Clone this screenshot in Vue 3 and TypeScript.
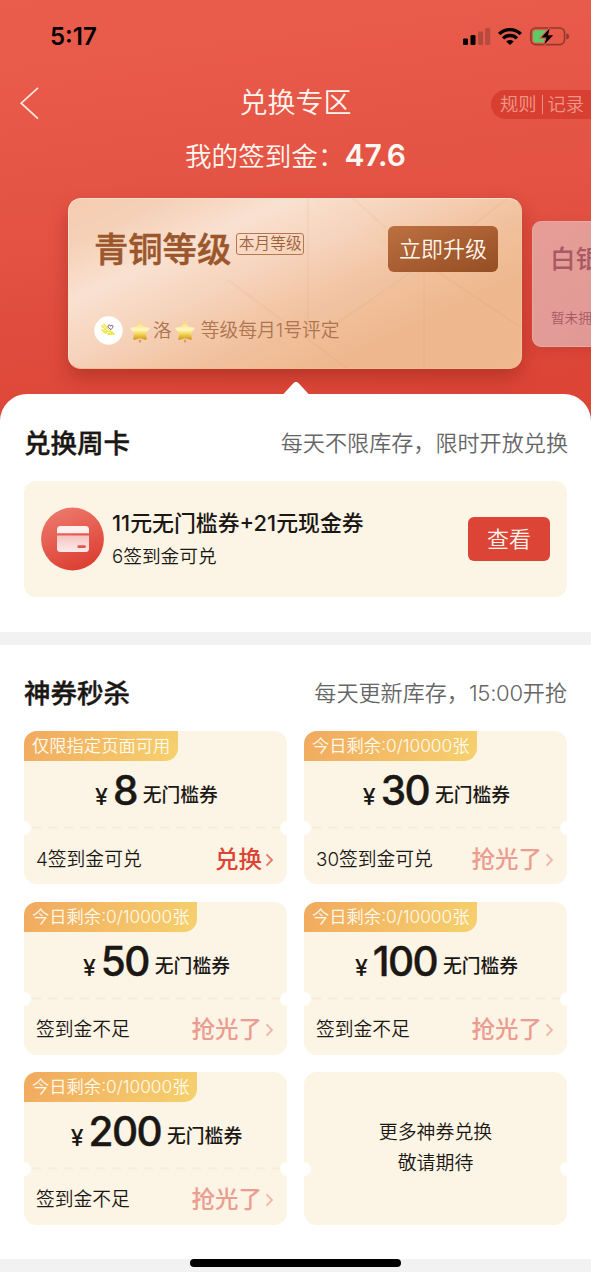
<script setup lang="ts">
interface Coupon {
  tag: string
  amount: string
  cost: string
  action: string
  available: boolean
}

const coupons: Coupon[] = [
  { tag: '仅限指定页面可用', amount: '8', cost: '4签到金可兑', action: '兑换', available: true },
  { tag: '今日剩余:0/10000张', amount: '30', cost: '30签到金可兑', action: '抢光了', available: false },
  { tag: '今日剩余:0/10000张', amount: '50', cost: '签到金不足', action: '抢光了', available: false },
  { tag: '今日剩余:0/10000张', amount: '100', cost: '签到金不足', action: '抢光了', available: false },
  { tag: '今日剩余:0/10000张', amount: '200', cost: '签到金不足', action: '抢光了', available: false },
]
</script>

<template>
  <div class="page">
    <header class="hero">
      <div class="status">
        <span class="time">5:17</span>
        <svg class="status-icons" width="108" height="22" viewBox="0 0 108 22">
          <rect x="1" y="12.5" width="5" height="6.5" rx="1.3" fill="#000" />
          <rect x="8.5" y="9" width="5" height="10" rx="1.3" fill="#000" />
          <rect x="16" y="5.5" width="5" height="13.5" rx="1.3" fill="#b14a3e" />
          <rect x="23.2" y="2" width="5" height="17" rx="1.3" fill="#b84b3f" />
          <g fill="none" stroke="#000" stroke-width="3.4">
            <path d="M37.2 8 A15.4 15.4 0 0 1 58.8 8" />
            <path d="M41.1 12.4 A9.8 9.8 0 0 1 54.9 12.4" />
          </g>
          <path d="M48 19 L44.2 15.4 Q48 12.6 51.8 15.4 Z" fill="#000" />
          <rect x="68.9" y="2" width="33.6" height="16.6" rx="4.8" fill="none" stroke="#93382e" stroke-width="1.6" />
          <path d="M104.3 7.2 Q107.2 8.2 107.2 10.4 T104.3 13.6 Z" fill="#93382e" />
          <path d="M74 4.2 H87 V16.6 H74 Q71 16.6 71 13.6 V7.2 Q71 4.2 74 4.2Z" fill="#5ccb68" />
          <path d="M87.7 2.2 L79.4 11.6 H84.5 L82.4 18.4 L91.2 9.2 H86 Z" fill="#000" stroke="#e75b4b" stroke-width="2.4" paint-order="stroke" />
        </svg>
      </div>

      <nav class="nav">
        <svg class="back" width="20" height="34" viewBox="0 0 20 34">
          <path d="M19 1.8 L2.2 17.2 L19 32.6" fill="none" stroke="#ffe9e2" stroke-width="1.7" />
        </svg>
        <h1 class="title">兑换专区</h1>
        <div class="links"><span>规则</span><i class="bar"></i><span>记录</span></div>
      </nav>

      <div class="balance"><span class="balance-label">我的签到金：</span><b class="balance-value">47.6</b></div>

      <div class="levels">
        <section class="level bronze">
          <svg class="facets" width="454" height="171" viewBox="0 0 454 171">
            <path d="M240 0 L356 70 L240 140Z" fill="#fff" opacity=".03" />
            <path d="M285 0 L356 65 L440 0 M356 65 V171 M356 65 L262 130 M356 65 L454 130 M240 0 V135 M160 82 L280 171" fill="none" stroke="#cf8c60" stroke-opacity=".08" stroke-width="2" />
          </svg>
          <div class="level-top">
            <strong class="level-name">青铜等级</strong>
            <span class="level-badge">本月等级</span>
            <button class="upgrade">立即升级</button>
          </div>
          <div class="member">
            <svg width="29" height="29" viewBox="0 0 29 29">
              <circle cx="14.5" cy="14.5" r="14.2" fill="#fff" />
              <path d="M8 10 L12 14 M10 8.5 L14 13 M8 14 L12 17 M12 15 L17 16 M14 18 L18 18 M16 15 L20 18" fill="none" stroke="#eee94b" stroke-width="1.8" stroke-linecap="round" stroke-dasharray="2 1" />
              <path d="M17 13.6 C13.7 11.9 13.3 9.8 14.8 9.1 C15.8 8.6 16.5 9.5 16.6 10.2 C17.4 9 19 9.1 19 10.4 C19 11.7 17.8 12.5 17 13.6Z" fill="#fff" stroke="#74508a" stroke-width="1" />
            </svg>
            <svg class="star star-a" width="20" height="22" viewBox="0 0 20 22">
              <defs>
                <linearGradient id="gold" x1="0" y1="0" x2="0" y2="1">
                  <stop offset="0" stop-color="#fbd978" />
                  <stop offset=".45" stop-color="#fff8c0" />
                  <stop offset=".72" stop-color="#f1d24e" />
                  <stop offset="1" stop-color="#d59c26" />
                </linearGradient>
              </defs>
              <path d="M10 19.6v1" stroke="#d9a04e" stroke-width="2.2" stroke-linecap="round" />
              <path d="M10 1.4 L12.8 6.4 L18.6 7.4 L14.8 11.9 L15.8 18 L10 16 L4.2 18 L5.2 11.9 L1.4 7.4 L7.2 6.4Z" fill="url(#gold)" stroke="url(#gold)" stroke-width="2" stroke-linejoin="round" />
            </svg>
            <span class="member-name">洛</span>
            <svg class="star star-b" width="20" height="22" viewBox="0 0 20 22">
              <path d="M10 19.6v1" stroke="#d9a04e" stroke-width="2.2" stroke-linecap="round" />
              <path d="M10 1.4 L12.8 6.4 L18.6 7.4 L14.8 11.9 L15.8 18 L10 16 L4.2 18 L5.2 11.9 L1.4 7.4 L7.2 6.4Z" fill="url(#gold)" stroke="url(#gold)" stroke-width="2" stroke-linejoin="round" />
            </svg>
            <span class="member-note">等级每月1号评定</span>
          </div>
        </section>

        <section class="level silver">
          <strong class="silver-name">白银等级</strong>
          <span class="silver-note">暂未拥有</span>
        </section>
      </div>
    </header>

    <main class="panel">
      <svg class="pointer" width="30" height="14" viewBox="0 0 30 14">
        <path d="M1.5 14 L12.1 2.5 Q15 -.8 17.9 2.5 L28.5 14Z" fill="#fff" />
      </svg>

      <section class="weekly">
        <div class="heading">
          <h2>兑换周卡</h2>
          <p>每天不限库存，限时开放兑换</p>
        </div>
        <div class="week-card">
          <svg class="week-icon" width="64" height="64" viewBox="0 0 64 64">
            <defs>
              <linearGradient id="disc" x1=".2" y1="0" x2=".6" y2="1">
                <stop offset="0" stop-color="#ee7a6e" />
                <stop offset="1" stop-color="#dc3f31" />
              </linearGradient>
              <linearGradient id="face" x1="0" y1="0" x2="0" y2="1">
                <stop offset="0" stop-color="#f6c4c1" />
                <stop offset="1" stop-color="#fcebea" />
              </linearGradient>
            </defs>
            <circle cx="31.5" cy="32" r="31.4" fill="url(#disc)" />
            <path d="M16 26.2 V22.5 Q16 19 19.5 19 H44.5 Q48 19 48 22.5 V26.2Z" fill="#fdf0ee" />
            <path d="M16 28.6 H48 V41.5 Q48 45 44.5 45 H19.5 Q16 45 16 41.5Z" fill="url(#face)" />
            <rect x="36.5" y="38.3" width="8.3" height="2.8" rx="1" fill="#e0584e" />
          </svg>
          <div class="week-text">
            <strong>11元无门槛券+21元现金券</strong>
            <span>6签到金可兑</span>
          </div>
          <button class="view">查看</button>
        </div>
      </section>

      <div class="divider"></div>

      <section class="flash">
        <div class="heading">
          <h2>神券秒杀</h2>
          <p>每天更新库存，<span class="clock">15:00</span>开抢</p>
        </div>
        <div class="grid">
          <article v-for="c in coupons" :key="c.amount" class="ticket">
            <span class="tag">{{ c.tag }}</span>
            <div class="value">
              <span class="yen">¥</span><b class="amount">{{ c.amount }}</b><span class="kind">无门槛券</span>
            </div>
            <svg class="perforation" width="263" height="3" viewBox="0 0 263 3">
              <path d="M8 1.5 H256" stroke="#f7ecda" stroke-width="2" stroke-dasharray="9 7" />
            </svg>
            <div class="ticket-foot">
              <span class="cost">{{ c.cost }}</span>
              <span class="action" :class="{ soldout: !c.available }">
                {{ c.action }}
                <svg width="10" height="16" viewBox="0 0 10 16">
                  <path d="M1.5 2.4 L7 8 L1.5 13.6" fill="none" stroke="currentColor" stroke-width="1.8" />
                </svg>
              </span>
            </div>
          </article>
          <article class="ticket more">
            <p>更多神券兑换</p>
            <p>敬请期待</p>
          </article>
        </div>
      </section>
      <footer class="bottom"><div class="home-bar"></div></footer>
    </main>
  </div>
</template>

<style>
body {
  margin: 0;
  background: #fff;
}
</style>

<style scoped>
.page {
  width: 591px;
  height: 1280px;
  overflow: hidden;
  background: #fff;
  font-family: Inter, "Noto Sans CJK SC", sans-serif;
  color: #1a1714;
}
h1, h2, p { margin: 0; }
button { border: 0; padding: 0; font-family: inherit; }
.page * { box-sizing: border-box; white-space: nowrap; }

.hero {
  height: 430px;
  overflow: hidden;
  background: linear-gradient(173deg, #ea5d4c 0%, #e45444 43%, #dc4536 90%);
}
.status {
  height: 71px;
  padding: 26px 21px 0 50px;
  display: flex;
  justify-content: space-between;
}
.time { font-size: 24px; line-height: 21px; font-weight: 600; color: #000; }
.nav {
  height: 63px;
  display: grid;
  grid-template-columns: 140px 1fr 140px;
  align-items: center;
}
.back { margin-left: 19px; }
.title {
  text-align: center;
  font-size: 28px;
  line-height: 40px;
  font-weight: 350;
  color: #fff5ef;
}
.links {
  justify-self: end;
  width: 100px;
  height: 29px;
  margin-top: 3px;
  padding-left: 9px;
  border-radius: 15px 0 0 15px;
  background: #d93f30;
  display: flex;
  align-items: center;
  font-size: 18.3px;
  line-height: 28px;
  font-weight: 350;
  color: #f0978a;
}
.bar { width: 1px; height: 19px; margin: 0 5px; background: #ee9185; }
.balance {
  height: 44px;
  display: flex;
  align-items: center;
  justify-content: center;
  color: #fff8f2;
}
.balance-label { font-size: 26.6px; line-height: 40px; font-weight: 350; }
.balance-value { font-size: 30px; line-height: 38px; margin-top: -2px; font-weight: 600; }

.levels {
  padding: 20px 0 0 68px;
  display: flex;
  align-items: flex-start;
  gap: 10px;
}
.level { flex: none; position: relative; }
.bronze {
  width: 454px;
  height: 171px;
  padding: 27px 23px 0 25px;
  border-radius: 13px;
  border: 1px solid #f9e0cf;
  border-right-color: #f2c7a5;
  border-bottom-color: #efbd95;
  background: linear-gradient(155deg, #f4ccb0 0%, #f5d0b7 12%, #f9e1d1 27%, #f6d3bb 42%, #f1c19d 60%, #eeb78d 78%, #efb88f 100%);
  box-shadow: 0 9px 18px rgba(130, 25, 18, .38);
}
.facets { position: absolute; inset: -1px; border-radius: 13px; }
.level-top { position: relative; height: 90px; display: flex; align-items: flex-start; }
.level-name { margin-top: 2px; font-size: 34.3px; line-height: 44px; font-weight: 500; color: #9b562b; -webkit-text-stroke: .5px #9b562b; }
.level-badge {
  width: 68px;
  height: 22px;
  margin: 7px 0 0 5px;
  border: 1px solid #b57650;
  border-radius: 3px;
  text-align: center;
  font-size: 15.7px;
  line-height: 20px;
  font-weight: 350;
  color: #9e6139;
}
.upgrade {
  width: 110px;
  height: 46px;
  margin-left: auto;
  border-radius: 6px;
  background: linear-gradient(160deg, #bd7141, #954d23);
  font-size: 22px;
  line-height: 46px;
  font-weight: 350;
  color: #fff6ec;
}
.member { position: relative; height: 29px; display: flex; align-items: center; color: #ae7450; font-weight: 350; }
.star-a { margin: 3px 3px 0 7px; }
.star-b { margin: 3px 6px 0 3px; }
.member-name { font-size: 18.7px; line-height: 28px; }
.member-note { font-size: 18.8px; line-height: 28px; }
.silver {
  width: 366px;
  height: 126px;
  margin-top: 23px;
  padding: 21px 17px;
  border-radius: 9px;
  border: 1px solid #e4aaa5;
  background: linear-gradient(145deg, #e69d98, #e29b96 35%, #cd7e80);
  box-shadow: 0 5px 12px rgba(150, 35, 28, .2);
  display: flex;
  flex-direction: column;
  color: #a95864;
}
.silver-name { font-size: 25.5px; line-height: 32px; font-weight: 500; }
.silver-note { margin-top: 32px; padding-left: 1px; font-size: 13.6px; line-height: 22px; font-weight: 350; }

.panel {
  position: relative;
  height: 886px;
  margin-top: -36px;
  border-radius: 27px 27px 0 0;
  background: #fff;
}
.pointer { position: absolute; left: 281px; top: -13px; }
.heading { height: 40px; display: flex; align-items: center; justify-content: space-between; }
.heading h2 { font-size: 26.5px; line-height: 40px; font-weight: 500; -webkit-text-stroke: .4px #1a1714; }
.heading p { font-size: 22.1px; line-height: 40px; font-weight: 350; color: #666; }
.clock { letter-spacing: -.3px; }
.weekly { height: 238px; padding: 29px 23px 0 24px; }
.week-card {
  width: 543px;
  height: 116px;
  margin-top: 18px;
  padding: 0 17px;
  border-radius: 12px;
  background: #fcf4e4;
  display: flex;
  align-items: center;
}
.week-text { margin-left: 7px; display: flex; flex-direction: column; }
.week-text strong { font-size: 21.9px; line-height: 34px; font-weight: 500; }
.week-text span { font-size: 18.7px; line-height: 33px; font-weight: 350; }
.view {
  width: 82px;
  height: 44px;
  margin-left: auto;
  border-radius: 6px;
  background: #dc4435;
  font-size: 22px;
  line-height: 44px;
  font-weight: 350;
  color: #fff4ee;
}
.divider { height: 13px; background: #f2f2f2; }
.flash { height: 614px; padding: 28px 24px 0; }
.grid {
  margin-top: 18.4px;
  display: grid;
  grid-template-columns: 263px 263px;
  column-gap: 17px;
  row-gap: 17.3px;
}
.ticket {
  height: 153px;
  border-radius: 13px;
  background:
    radial-gradient(circle at 0 97px, #fff 6px, transparent 8px),
    radial-gradient(circle at 100% 97px, #fff 6px, transparent 8px),
    #fcf4e4;
  overflow: hidden;
  display: flex;
  flex-direction: column;
  align-items: flex-start;
}
.tag {
  height: 30px;
  padding: 0 8px;
  border-radius: 0 0 13px 0;
  background: linear-gradient(120deg, #f1a95e, #f6d16e);
  font-size: 17.3px;
  line-height: 29px;
  font-weight: 350;
  color: #fffbed;
}
.value { align-self: stretch; height: 65px; padding-left: 2px; text-align: center; line-height: 60px; }
.value > * { line-height: 1; }
.yen { font-size: 23px; font-weight: 500; margin-right: 5px; }
.amount { font-size: 40.5px; line-height: 60px; font-weight: 500; letter-spacing: -1.6px; -webkit-text-stroke: .4px #1a1714; }
.kind { font-size: 18.8px; font-weight: 500; margin-left: 6px; vertical-align: 3px; }
.perforation { display: block; }
.ticket-foot {
  align-self: stretch;
  height: 55px;
  padding: 6px 12px 0;
  display: flex;
  align-items: center;
  justify-content: space-between;
}
.cost { font-size: 18.8px; line-height: 30px; font-weight: 350; }
.action { display: flex; align-items: center; gap: 3px; font-size: 23.5px; line-height: 34px; font-weight: 500; color: #dc4435; }
.action svg { opacity: .7; }
.soldout { color: #eb9d92; }
.more { padding-top: 45px; align-items: center; }
.more p { font-size: 18.9px; line-height: 31.5px; font-weight: 350; }
.bottom {
  height: 13px;
  background: #f2f2f2;
  display: flex;
  justify-content: center;
}
.home-bar { width: 211px; height: 8px; border-radius: 4px; background: #000; }
</style>
